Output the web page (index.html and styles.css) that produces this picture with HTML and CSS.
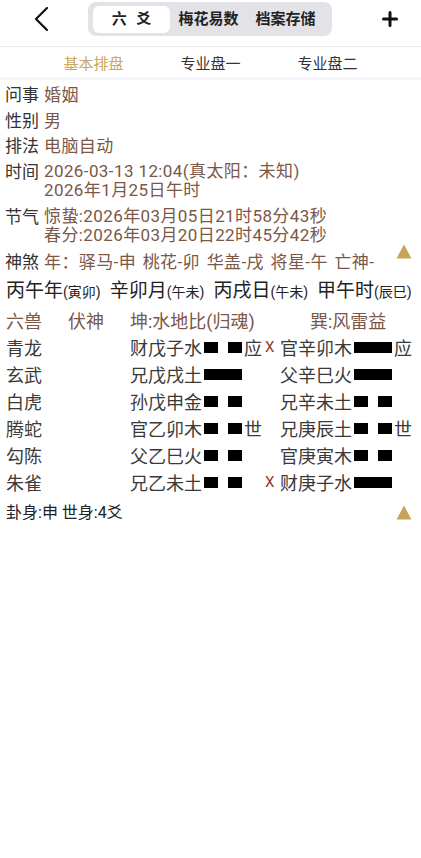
FILE: index.html
```html
<!DOCTYPE html>
<html lang="zh">
<head>
<meta charset="UTF-8" />
<meta name="viewport" content="width=device-width, initial-scale=1.0" />
<title>六爻排盘</title>
<link rel="stylesheet" href="styles.css">
</head>
<body>
<header class="topbar">
  <svg class="back" width="20" height="26" viewBox="0 0 20 26"><polyline points="15,2 4,13 15,24" fill="none" stroke="#111" stroke-width="2.2" stroke-linecap="round" stroke-linejoin="round"/></svg>
  <nav class="segment">
    <span class="seg-item active">六 爻</span>
    <span class="seg-item">梅花易数</span>
    <span class="seg-item">档案存储</span>
  </nav>
  <svg class="plus" width="16" height="16" viewBox="0 0 16 16"><path d="M8 1.5v13M1.5 8h13" stroke="#111" stroke-width="3" stroke-linecap="round"/></svg>
</header>

<nav class="subtabs">
  <span class="subtab active">基本排盘</span>
  <span class="subtab">专业盘一</span>
  <span class="subtab">专业盘二</span>
</nav>

<main class="content">
  <!-- ------ 基本信息 ------ -->
  <section class="info">
    <div class="info-row"><span class="label">问事</span><span class="value">婚姻</span></div>
    <div class="info-row"><span class="label">性别</span><span class="value">男</span></div>
    <div class="info-row"><span class="label">排法</span><span class="value">电脑自动</span></div>
    <div class="info-row"><span class="label">时间</span>
      <div class="value multi"><div>2026-03-13 12:04(真太阳：未知)</div><div>2026年1月25日午时</div></div>
    </div>
    <div class="info-row"><span class="label">节气</span>
      <div class="value multi"><div>惊蛰:2026年03月05日21时58分43秒</div><div>春分:2026年03月20日22时45分42秒</div></div>
    </div>
    <div class="info-row"><span class="label">神煞</span><span class="value shensha">年：驿马-申 桃花-卯 华盖-戌 将星-午 亡神-</span>
      <svg class="tri" width="16" height="15" viewBox="0 0 16 15"><polygon points="8,0.5 15.5,14.5 0.5,14.5" fill="#c9a35a"/></svg>
    </div>
  </section>

  <!-- ------ 四柱 ------ -->
  <div class="pillars">
    <span>丙午年<small>(寅卯)</small></span>
    <span>辛卯月<small>(午未)</small></span>
    <span>丙戌日<small>(午未)</small></span>
    <span>甲午时<small>(辰巳)</small></span>
  </div>

  <!-- ------ 卦象 ------ -->
  <section class="gua">
    <span class="head">六兽</span><span class="head">伏神</span><span class="head span2">坤:水地比(归魂)</span><span class="head right-head">巽:风雷益</span>

    <span>青龙</span><span></span>
    <span class="yao">财戊子水<i class="yin"><b></b><b></b></i>应</span><span class="mark">X</span>
    <span class="yao">官辛卯木<i class="yang"></i>应</span>

    <span>玄武</span><span></span>
    <span class="yao">兄戊戌土<i class="yang"></i></span><span class="mark"></span>
    <span class="yao">父辛巳火<i class="yang"></i></span>

    <span>白虎</span><span></span>
    <span class="yao">孙戊申金<i class="yin"><b></b><b></b></i></span><span class="mark"></span>
    <span class="yao">兄辛未土<i class="yin"><b></b><b></b></i></span>

    <span>腾蛇</span><span></span>
    <span class="yao">官乙卯木<i class="yin"><b></b><b></b></i>世</span><span class="mark"></span>
    <span class="yao">兄庚辰土<i class="yin"><b></b><b></b></i>世</span>

    <span>勾陈</span><span></span>
    <span class="yao">父乙巳火<i class="yin"><b></b><b></b></i></span><span class="mark"></span>
    <span class="yao">官庚寅木<i class="yin"><b></b><b></b></i></span>

    <span>朱雀</span><span></span>
    <span class="yao">兄乙未土<i class="yin"><b></b><b></b></i></span><span class="mark">X</span>
    <span class="yao">财庚子水<i class="yang"></i></span>
  </section>

  <div class="footer-row">
    <span>卦身:申 世身:4爻</span>
    <svg class="tri" width="16" height="15" viewBox="0 0 16 15"><polygon points="8,0.5 15.5,14.5 0.5,14.5" fill="#c9a35a"/></svg>
  </div>
</main>
</body>
</html>
```

FILE: styles.css
```css
/* ---------- Root ---------- */
:root {
  --font: Roboto, "Noto Sans CJK SC", sans-serif;
  --label: #333;
  --value: #7a5747;
  --gold: #c9a661;
}

body {
  margin: 0;
  font-family: var(--font);
  color: var(--label);
  background: #fff;
}

/* ---------- Top bar ---------- */
.topbar {
  display: flex;
  align-items: center;
  padding: 2px 0 10px;
  border-bottom: 1px solid #eceef2;
}
.back { margin-left: 32px; }
.plus { margin-left: auto; margin-right: 23px; }

.segment {
  display: flex;
  align-items: center;
  margin-left: 36px;
  width: 244px;
  height: 34px;
  box-sizing: border-box;
  padding: 3px 5px;
  background: #e2e2e7;
  border-radius: 8px;
}
.seg-item {
  padding: 0 8.5px;
  font-size: 15px;
  font-weight: 700;
  color: #222;
  line-height: 27px;
  white-space: nowrap;
}
.seg-item.active {
  width: 77px;
  box-sizing: border-box;
  text-align: center;
  background: #fff;
  border-radius: 6px;
  word-spacing: 6px;
}

/* ---------- Sub tabs ---------- */
.subtabs {
  display: flex;
  padding: 0 35px;
  height: 30px;
  align-items: center;
  border-bottom: 3px solid #f2f5f9;
}
.subtab {
  flex: 1;
  text-align: center;
  font-size: 15px;
  color: #333;
}
.subtab.active { color: var(--gold); }

/* ---------- Content ---------- */
.content { padding: 6px 9px 0 5px; }

.info { display: flex; flex-direction: column; gap: 7.5px; }
.info-row {
  display: flex;
  align-items: flex-start;
  font-size: 17px;
  line-height: 18px;
}
.label { width: 39px; flex: none; }
.value {
  color: var(--value);
  white-space: nowrap;
  letter-spacing: 0.4px;
}
.value.multi { line-height: 19px; margin-top: -0.5px; }
.shensha { word-spacing: 2px; }
.tri { margin-left: auto; flex: none; margin-top: -9px; }

.pillars {
  display: flex;
  gap: 9px;
  margin-top: 9px;
  padding-left: 1px;
  font-size: 19px;
  line-height: 22px;
  color: #222;
  white-space: nowrap;
}
.pillars small { font-size: 14px; }

/* ----- 卦象 grid ----- */
.gua {
  display: grid;
  grid-template-columns: 62px 62px 135px 15px auto;
  grid-auto-rows: 27px;
  align-items: center;
  margin-top: 4px;
  padding-left: 1px;
  font-size: 18px;
  color: #3a3a3a;
}
.gua .head { color: var(--value); }
.gua .span2 { grid-column: span 2; }
.gua .right-head { padding-left: 30px; }

.yao { display: flex; align-items: center; white-space: nowrap; }
.yao i { display: flex; width: 38px; height: 11px; margin: 0 2px; }
.yao i.yang { background: #000; }
.yao i.yin { justify-content: space-between; }
.yao i.yin b { width: 14px; background: #000; }

.mark {
  font-size: 15px;
  color: #8b3a30;
}

.footer-row {
  display: flex;
  align-items: center;
  margin-top: 6px;
  padding-left: 1px;
  font-size: 16px;
  line-height: 22px;
  color: #222;
}
.footer-row .tri { margin-top: 0; }
```
